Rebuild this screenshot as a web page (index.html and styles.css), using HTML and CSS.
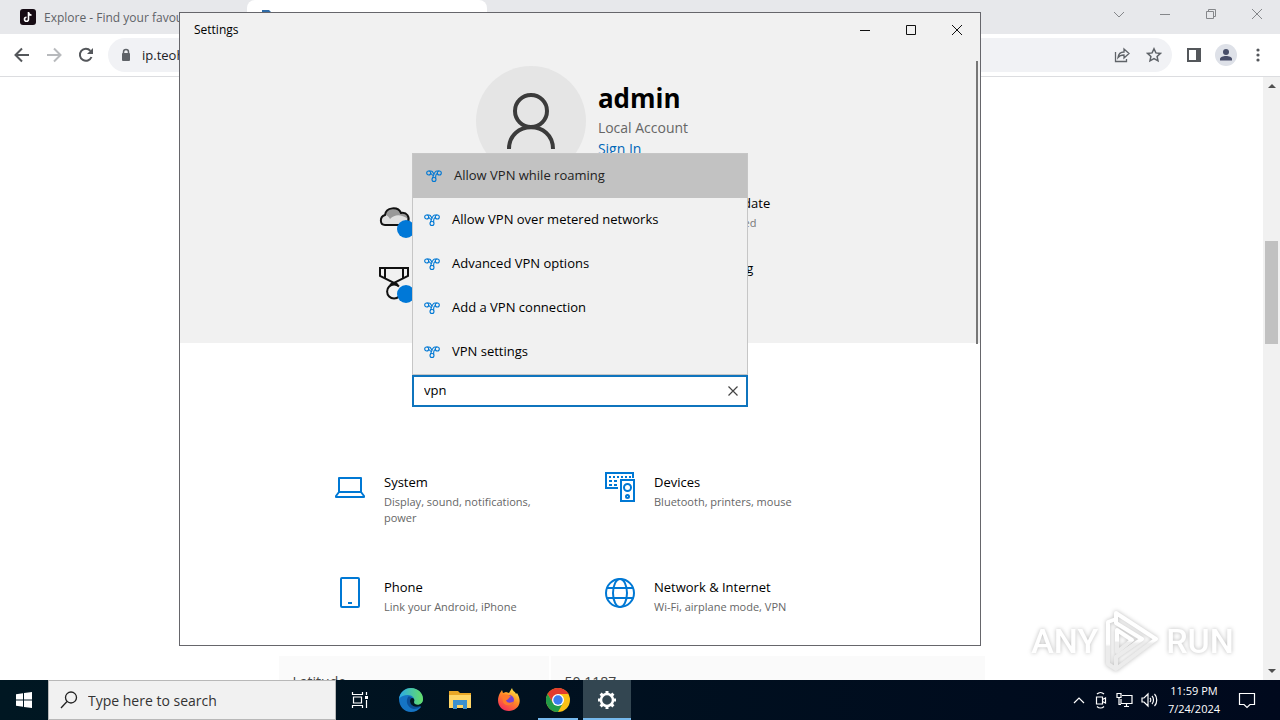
FILE: index.html
```
<!DOCTYPE html>
<html lang="en">
<head>
    <meta charset="UTF-8" />
    <meta name="viewport" content="width=device-width, initial-scale=1.0" />
    <title>Settings</title>
    <link rel="stylesheet" href="styles.css">
</head>
<body>

<!-- shared icon -->
<svg class="symbols" width="0" height="0">
    <symbol id="vpn" viewBox="0 0 16 14">
        <g fill="none" stroke="#0078d4" stroke-width="1.1">
            <circle cx="2.700" cy="4" r="2"/>
            <circle cx="13.300" cy="4" r="2"/>
            <circle cx="8" cy="10.500" r="2"/>
            <path d="M2.700 2H5c2.500 0 2 3.500 3.500 3.500M13.300 2H11C8 2 8 6 6.300 9.500M4.700 4.500C6 5 6 6.500 7.500 6.500M11.300 4.500C10 5 9.500 7 9.700 9.500"/>
        </g>
    </symbol>
</svg>

<div class="desktop">
    <div class="browser">
        <div class="tabs">
            <div class="tab">
                <svg width="16" height="16" viewBox="0 0 16 16"><rect width="16" height="16" rx="3" fill="#160b14"/><path d="M8.500 3v7.200a2 2 0 1 1-2-2M8.500 3.500c.3 1.700 1.500 2.500 3 2.600" fill="none" stroke="#fff" stroke-width="1.600"/></svg>
                <span>Explore - Find your favourite</span>
            </div>
            <div class="tab active">
                <svg width="16" height="16" viewBox="0 0 16 16"><path d="M3 1h7l3 3v10H3z" fill="#2f6ca8"/></svg>
            </div>
            <button class="new-tab" aria-label="New tab">+</button>
            <div class="window-buttons chrome-buttons">
                <button aria-label="Search tabs"><svg width="12" height="12" viewBox="0 0 12 12"><path d="M1 4l5 5 5-5"/></svg></button>
                <button aria-label="Minimize"><svg width="12" height="12" viewBox="0 0 12 12"><path d="M1 6.500h10"/></svg></button>
                <button aria-label="Restore"><svg width="12" height="12" viewBox="0 0 12 12"><path d="M1.500 3.500h7v7h-7zM3.500 3.500v-2h7v7h-2"/></svg></button>
                <button aria-label="Close"><svg width="12" height="12" viewBox="0 0 12 12"><path d="M1 1l10 10M11 1L1 11"/></svg></button>
            </div>
        </div>

        <div class="toolbar">
            <button aria-label="Back"><svg width="16" height="16" viewBox="0 0 16 16"><path d="M15 8H2M8 1.500L1.500 8 8 14.500" fill="none" stroke="#54575b" stroke-width="2"/></svg></button>
            <button aria-label="Forward"><svg width="16" height="16" viewBox="0 0 16 16"><path d="M1 8h13M8 1.500L14.500 8 8 14.500" fill="none" stroke="#b8babd" stroke-width="2"/></svg></button>
            <button aria-label="Reload"><svg width="16" height="16" viewBox="0 0 16 16"><path d="M13.500 10A6 6 0 1 1 12.400 3.800" fill="none" stroke="#54575b" stroke-width="2"/><path d="M15 1v6H9z" fill="#54575b"/></svg></button>
            <div class="address">
                <svg width="12" height="14" viewBox="0 0 12 14"><rect x="2" y="5" width="8" height="8" rx="1" fill="#5f6368"/><path d="M3.500 6V4a2.500 2.500 0 0 1 5 0v2" fill="none" stroke="#5f6368" stroke-width="1.500"/></svg>
                <input type="text" value="ip.teoh.io" aria-label="Address">
                <button aria-label="Share"><svg width="16" height="16" viewBox="0 0 16 16"><path d="M1.500 5v9.500h11V12M4 10.500c.5-4 3-5.500 6-5.500V2l5 4.500-5 4.500V8c-3 0-4.500.5-6 2.500z" fill="none" stroke="#5f6368" stroke-width="1.300"/></svg></button>
                <button aria-label="Bookmark"><svg width="16" height="16" viewBox="0 0 16 16"><path d="M8 1.800l1.900 4.100 4.500.5-3.300 3 .9 4.400L8 11.600l-4 2.200.9-4.400-3.300-3 4.500-.5z" fill="none" stroke="#5f6368" stroke-width="1.500"/></svg></button>
            </div>
            <button aria-label="Side panel"><svg width="14" height="14" viewBox="0 0 14 14"><path d="M1 1h12v12H1z" fill="none" stroke="#54575b" stroke-width="2"/><path d="M9 1h4v12H9z" fill="#54575b"/></svg></button>
            <button aria-label="Profile"><svg width="22" height="22" viewBox="0 0 22 22"><circle cx="11" cy="11" r="11" fill="#dee1e8"/><circle cx="11" cy="8" r="3" fill="#474d68"/><path d="M5 16.500v-1.500c0-4 12-4 12 0v1.500z" fill="#474d68"/></svg></button>
            <button aria-label="Menu"><svg width="16" height="16" viewBox="0 0 16 16" fill="#54575b"><circle cx="8" cy="3" r="1.600"/><circle cx="8" cy="8" r="1.600"/><circle cx="8" cy="13" r="1.600"/></svg></button>
        </div>

        <div class="page">
            <div class="page-content">
                <table>
                    <tr>
                        <td>Latitude</td>
                        <td>50.1187</td>
                    </tr>
                </table>
            </div>
            <div class="scrollbar">
                <span class="arrow up"></span>
                <span class="thumb"></span>
                <span class="arrow down"></span>
            </div>
        </div>
    </div>

    <div class="watermark">
        <span>ANY</span>
        <svg width="60" height="66" viewBox="0 0 60 66">
            <defs>
                <linearGradient id="mark" x1="0" y1="0" x2="0" y2="1"><stop offset="0.500" stop-color="#fff"/><stop offset="0.550" stop-color="#ececec"/></linearGradient>
            </defs>
            <g fill="none" stroke="url(#mark)" stroke-width="4" stroke-linejoin="round">
                <path d="M14 5l40 26-40 30V49l26-18-26-16z"/>
                <path d="M14 11L6 14v42l8 5"/>
                <path d="M15 22v22l15-12z"/>
            </g>
        </svg>
        <span>RUN</span>
    </div>

    <div class="settings">
        <div class="titlebar">
            <span>Settings</span>
            <div class="window-buttons">
                <button aria-label="Minimize"><svg width="12" height="12" viewBox="0 0 12 12"><path d="M1 6.500h10"/></svg></button>
                <button aria-label="Maximize"><svg width="12" height="12" viewBox="0 0 12 12"><path d="M1.500 1.500h9v9h-9z"/></svg></button>
                <button aria-label="Close"><svg width="12" height="12" viewBox="0 0 12 12"><path d="M1 1l10 10M11 1L1 11"/></svg></button>
            </div>
        </div>

        <div class="account-area">
            <div class="account">
                <div class="avatar">
                    <svg width="50" height="58" viewBox="0 0 50 58"><circle cx="25" cy="19" r="16" fill="none" stroke="#3b3b3b" stroke-width="4"/><path d="M3 57c0-29 44-29 44 0" fill="none" stroke="#3b3b3b" stroke-width="4"/></svg>
                </div>
                <div>
                    <h1>admin</h1>
                    <p>Local Account</p>
                    <a href="#">Sign In</a>
                </div>
            </div>
            <div class="status-list">
                <div class="status">
                    <svg width="36" height="36" viewBox="0 -2 36 36">
                        <path d="M7 21C2 21 1 13 7 11c1-8 13-9 16-2 6-1 9 4 7 9-1 2-3 3-5 3z" fill="#e0e0e0"/>
                        <path d="M7 11c1-8 13-9 16-2 4 0 7 3 7 6-7-5-13-5-18 0-1-2-3-4-5-4z" fill="#999"/>
                        <path d="M7 21C2 21 1 13 7 11c1-8 13-9 16-2 6-1 9 4 7 9-1 2-3 3-5 3z" fill="none" stroke="#111" stroke-width="2"/>
                        <circle cx="28" cy="25" r="9" fill="#0078d7"/>
                    </svg>
                </div>
                <div class="status">
                    <div>
                        <h2>Windows Update</h2>
                        <p>Attention needed</p>
                    </div>
                </div>
                <div class="status">
                    <svg width="36" height="36" viewBox="0 2 36 36">
                        <g fill="none" stroke="#111" stroke-width="2"><path d="M2 3h28v8l-14 7L2 11zM7 3v10M25 3v10M16 17l-4 3M16 17l4 3"/><path d="M21 31.500a7 7 0 1 1 0-10"/></g>
                        <circle cx="28" cy="29" r="9" fill="#0078d7"/>
                    </svg>
                </div>
                <div class="status">
                    <div>
                        <h2>Web browsing</h2>
                    </div>
                </div>
            </div>
        </div>

        <form class="search">
            <ul class="suggestions">
                <li class="selected"><svg width="16" height="14"><use href="#vpn"/></svg>Allow VPN while roaming</li>
                <li><svg width="16" height="14"><use href="#vpn"/></svg>Allow VPN over metered networks</li>
                <li><svg width="16" height="14"><use href="#vpn"/></svg>Advanced VPN options</li>
                <li><svg width="16" height="14"><use href="#vpn"/></svg>Add a VPN connection</li>
                <li><svg width="16" height="14"><use href="#vpn"/></svg>VPN settings</li>
            </ul>
            <input type="text" value="vpn" aria-label="Find a setting">
            <button type="button" aria-label="Clear"><svg width="10" height="10" viewBox="0 0 10 10"><path d="M.5.5l9 9M9.500.5l-9 9" stroke="#444" stroke-width="1.200"/></svg></button>
        </form>

        <div class="categories">
            <a href="#" class="category">
                <svg width="32" height="32" viewBox="0 0 32 32"><path d="M5 6h22v14H5zM5 20l-3 4v1h28v-1l-3-4" fill="none" stroke="#0078d4" stroke-width="2" stroke-linejoin="round"/></svg>
                <div>
                    <h2>System</h2>
                    <p>Display, sound, notifications, power</p>
                </div>
            </a>
            <a href="#" class="category">
                <svg width="32" height="32" viewBox="0 0 32 32">
                    <g fill="none" stroke="#0078d4" stroke-width="2"><path d="M14 16H2V1h27v5M17 8h13v21H17z"/><circle cx="23.500" cy="15.500" r="3.500"/><circle cx="23.500" cy="24.500" r="1.500"/><path d="M5 5h22" stroke-dasharray="2 2"/><path d="M5 9h9M5 13h9" stroke-dasharray="3 2"/></g>
                </svg>
                <div>
                    <h2>Devices</h2>
                    <p>Bluetooth, printers, mouse</p>
                </div>
            </a>
            <a href="#" class="category">
                <svg width="32" height="32" viewBox="0 0 32 32"><rect x="7" y="1" width="18" height="29" rx="1" fill="none" stroke="#0078d4" stroke-width="2"/><path d="M14 26h4" stroke="#0078d4" stroke-width="2"/></svg>
                <div>
                    <h2>Phone</h2>
                    <p>Link your Android, iPhone</p>
                </div>
            </a>
            <a href="#" class="category">
                <svg width="32" height="32" viewBox="0 0 32 32"><g fill="none" stroke="#0078d4" stroke-width="2"><circle cx="16" cy="16" r="14"/><ellipse cx="16" cy="16" rx="7" ry="14"/><path d="M3 11h26M3 21h26"/></g></svg>
                <div>
                    <h2>Network &amp; Internet</h2>
                    <p>Wi-Fi, airplane mode, VPN</p>
                </div>
            </a>
        </div>
        <span class="settings-scroll"></span>
    </div>
</div>

<div class="taskbar">
    <button aria-label="Start"><svg width="16" height="16" viewBox="0 0 16 16" fill="#fff"><path d="M0 2.200l7-1v6.300H0zM8 1l8-1v7.500H8zM0 8.500h7v6.300l-7-1zM8 8.500h8V16l-8-1z"/></svg></button>
    <label class="taskbar-search">
        <svg width="18" height="18" viewBox="0 0 18 18"><circle cx="11" cy="6.500" r="5.500" fill="none" stroke="#222" stroke-width="1.300"/><path d="M7 10.500L1 17" stroke="#222" stroke-width="1.300"/></svg>
        <input type="text" placeholder="Type here to search">
    </label>
    <button class="task-view" aria-label="Task view"><svg width="18" height="16" viewBox="0 0 18 16"><path d="M1.500 0v2.500h10V0M1.500 16v-2.500h10V16M2.500 5h8v6h-8zM15.500 0v3M15.500 8v8" fill="none" stroke="#fff" stroke-width="1.200"/><path d="M14 4h3v3h-3z" fill="#fff"/></svg></button>
    <button aria-label="Edge">
        <svg width="24" height="24" viewBox="0 0 24 24">
            <defs><linearGradient id="edge" x1="0" x2="1"><stop offset="0" stop-color="#2aa9e8"/><stop offset="1" stop-color="#66df66"/></linearGradient></defs>
            <path d="M0 11C1 4 6 0 12 0s12 5 12 11c0 3-2 5-4 6l2 2c-2 3-6 5-10 5C5 24 0 18 0 11z" fill="#1574c4"/>
            <path d="M0 11C1 4 6 0 12 0c7 0 12 5 12 11 0 4-3 6-6 6-4 0-5-2-3-4 1-3-2-6-6-6-4 0-7 1-9 4z" fill="url(#edge)"/>
            <path d="M9 9c-3 5 0 11 6 12 3 0 5-1 7-3-5 2-11 0-11-5 0-2 1-3 2-3-1-1-3-2-4-1z" fill="#0b4f98"/>
            <path d="M11 13c0 5 6 7 11 5l1-3c-3 3-8 2-8-1 1-2 0-4-2-4-1 0-2 1-2 3z" fill="#001722"/>
        </svg>
    </button>
    <button aria-label="File Explorer">
        <svg width="22" height="20" viewBox="0 0 22 20"><path d="M0 1h9l2 2h11v15H0z" fill="#e9a726"/><path d="M0 5h22v13H0z" fill="#ffd667"/><path d="M4 10h14v9h-4v-4H8v4H4z" fill="#3c91cf"/></svg>
    </button>
    <button aria-label="Firefox">
        <svg width="24" height="24" viewBox="0 0 24 24">
            <defs><linearGradient id="fox" x1="0.800" y1="0" x2="0.200" y2="1"><stop offset="0" stop-color="#fff04a"/><stop offset="0.450" stop-color="#ff8a25"/><stop offset="1" stop-color="#f5265f"/></linearGradient></defs>
            <path d="M3 5l2-3 1 3 3-1 3 1 3-5c1 4 3 3 4 6l1-1c7 11-1 18-8 18C3 23-2 14 3 5z" fill="url(#fox)"/>
            <circle cx="12" cy="12" r="5" fill="#7542d4"/><path d="M5 7c4-1 8 0 9 2-3 0-2 3-5 3 1 4 6 3 8 1-1 5-9 6-11 1z" fill="#ff7a2b"/>
        </svg>
    </button>
    <button class="running" aria-label="Chrome">
        <svg width="24" height="24" viewBox="0 0 24 24"><circle cx="12" cy="12" r="12" fill="#fbc116"/><path d="M1.600 6A12 12 0 0 1 22.400 6H12L7 15z" fill="#e33b2e"/><path d="M1.600 6A12 12 0 0 0 12 24l5-9H7z" fill="#229b48"/><circle cx="12" cy="12" r="6" fill="#fff"/><circle cx="12" cy="12" r="4.700" fill="#3b7ded"/></svg>
    </button>
    <button class="running current" aria-label="Settings">
        <svg width="20" height="20" viewBox="0 0 20 20" fill="none" stroke="#fff"><circle cx="10" cy="10" r="6" stroke-width="2.500"/><path d="M10 1v3M10 16v3M1 10h3M16 10h3M3.600 3.600l2 2M14.400 14.400l2 2M3.600 16.400l2-2M14.400 5.600l2-2" stroke-width="3"/></svg>
    </button>

    <div class="tray">
        <svg width="14" height="16" viewBox="0 0 14 16"><path d="M2 11l5-5 5 5"/></svg>
        <svg width="14" height="18" viewBox="0 0 14 18"><path d="M2.500 6h6v7h-6zM8.500 8.500l3-1.500v5l-3-1.500M3 3c2-2 5-2 7 0M3 15.500c2 2 5 2 7 0"/></svg>
        <svg width="17" height="16" viewBox="0 0 17 16"><path d="M6 3.500h10v8H5V7M8 14.500h5M10.500 11.500v3M1 1.500h4v4H1zM3 5.500v7h2"/></svg>
        <svg width="17" height="16" viewBox="0 0 17 16"><path d="M1 6h2l4-4v12l-4-4H1zM9 6c1 1 1 3 0 4M11 4c2 2 2 6 0 8M13.500 2c3 3 3 9 0 12"/></svg>
        <div class="clock">
            <span>11:59 PM</span>
            <span>7/24/2024</span>
        </div>
        <svg width="18" height="18" viewBox="0 0 18 18"><path d="M1.500 2.500h15v11H12l-3 3-3-3H1.500z"/></svg>
    </div>
</div>

</body>
</html>
```
FILE: styles.css
```
* {
    box-sizing: border-box;
    margin: 0;
    padding: 0;
}

body {
    font-family: 'Open Sans', 'Noto Sans', sans-serif;
    font-size: 13px;
    color: #000;
    height: 100vh;
    display: flex;
    flex-direction: column;
    overflow: hidden;
}

button {
    border: none;
    background: none;
    display: flex;
    align-items: center;
    justify-content: center;
}

input {
    font-family: inherit;
    border: none;
    outline: none;
    background: none;
    min-width: 0;
}

h2 {
    font-size: 13px;
    font-weight: normal;
    line-height: 20px;
}

.symbols {
    position: absolute;
}

.desktop {
    flex: 1;
    min-height: 0;
    position: relative;
    display: flex;
}

/* Browser */
.browser {
    flex: 1;
    min-width: 0;
    display: flex;
    flex-direction: column;
    background: #fff;
}

.tabs {
    height: 34px;
    display: flex;
    background: #e7e8eb;
    flex-shrink: 0;
}

.tab {
    width: 247px;
    padding-left: 20px;
    display: flex;
    align-items: center;
    gap: 8px;
    font-size: 12px;
    color: #5f6368;
}

.tab.active {
    width: 240px;
    padding-left: 12px;
    background: #fff;
    border-radius: 8px 8px 0 0;
}

.new-tab {
    width: 44px;
    font-size: 18px;
    color: #54575b;
}

.window-buttons {
    display: flex;
    margin-left: auto;
}

.window-buttons button {
    width: 46px;
}

.window-buttons svg {
    fill: none;
    stroke: #111;
    stroke-width: 1;
}

.chrome-buttons {
    height: 28px;
}

.chrome-buttons svg {
    stroke: #85878a;
}

.toolbar {
    height: 43px;
    padding: 4px 6px;
    display: flex;
    align-items: center;
    border-bottom: 1px solid #dcdde0;
    flex-shrink: 0;
}

.toolbar > button {
    width: 32px;
    height: 34px;
}

.address {
    flex: 1;
    height: 34px;
    margin: 0 6px;
    padding: 0 10px 0 12px;
    display: flex;
    align-items: center;
    gap: 16px;
    background: #f1f2f5;
    border-radius: 17px;
}

.address input {
    flex: 1;
    margin-left: -6px;
    font-size: 13px;
    color: #202124;
}

.page {
    flex: 1;
    min-height: 0;
    display: flex;
}

.page-content {
    flex: 1;
    padding-top: 577px;
    overflow: hidden;
}

.page table {
    width: 90%;
    max-width: 710px;
    margin: 0 auto;
    border-spacing: 2px;
    font-size: 14px;
    color: #444;
}

.page td {
    background: #fafafa;
    padding: 14px;
    line-height: 24px;
}

.page td:first-child {
    width: 270px;
}

.scrollbar {
    width: 17px;
    background: #f1f1f1;
    display: flex;
    flex-direction: column;
    align-items: center;
    padding: 7px 0;
}

.arrow {
    border: 4px solid transparent;
}

.arrow.up {
    border-top: none;
    border-bottom-color: #505050;
}

.arrow.down {
    margin-top: auto;
    border-bottom: none;
    border-top-color: #505050;
}

.thumb {
    width: 13px;
    height: 103px;
    margin-top: 153px;
    background: #c1c1c1;
}

.watermark {
    position: absolute;
    right: 46px;
    bottom: 6px;
    display: flex;
    align-items: center;
    gap: 4px;
    font-family: Roboto, sans-serif;
    font-weight: 500;
    font-size: 34px;
    color: #fff;
    filter: drop-shadow(0 0 2px #bbb);
}

/* Settings window */
.settings {
    position: absolute;
    left: 179px;
    right: 299px;
    top: 12px;
    bottom: 34px;
    background: #fff;
    border: 1px solid #66666b;
    overflow: hidden;
    display: flex;
    flex-direction: column;
}

.titlebar {
    height: 33px;
    padding-left: 14px;
    display: flex;
    align-items: center;
    font-size: 12px;
    background: #f1f1f1;
    flex-shrink: 0;
}

.titlebar .window-buttons {
    height: 32px;
}

.account-area {
    height: 297px;
    padding-top: 20px;
    background: #f1f1f1;
    flex-shrink: 0;
}

.account {
    padding-left: 4px;
    display: flex;
    justify-content: center;
    gap: 12px;
}

.avatar {
    width: 110px;
    height: 110px;
    border-radius: 50%;
    background: #e5e5e5;
    display: flex;
    align-items: center;
    justify-content: center;
}

.account h1 {
    font-size: 26px;
    line-height: 36px;
    margin: 14px 0 2px;
}

.account p {
    font-size: 14px;
    line-height: 20px;
    color: #666;
}

.account a {
    font-size: 14px;
    line-height: 22px;
    color: #0067b8;
    text-decoration: none;
}

.status-list {
    width: 404px;
    margin: 17px auto 0;
    display: grid;
    grid-template-columns: 289px 1fr;
    grid-auto-rows: 65px;
}

.status svg {
    margin-top: 9px;
}

.status h2 {
    white-space: nowrap;
}

.status p {
    font-size: 11px;
    line-height: 20px;
    color: #777;
    white-space: nowrap;
}

.search {
    position: relative;
    width: 336px;
    height: 32px;
    margin: 32px auto 0;
    border: 2px solid #0f74bd;
    background: #fff;
    display: flex;
    flex-shrink: 0;
}

.search input {
    flex: 1;
    padding: 0 10px 2px;
    font-size: 13px;
}

.search button {
    width: 26px;
}

.suggestions {
    position: absolute;
    left: -2px;
    right: -2px;
    bottom: 100%;
    margin-bottom: 2px;
    list-style: none;
    background: #f1f1f1;
    border: 1px solid #c6c6c6;
}

.suggestions li {
    height: 44px;
    padding: 0 0 2px 11px;
    display: flex;
    align-items: center;
    gap: 12px;
}

.suggestions svg {
    margin-top: 2px;
}

.suggestions .selected {
    padding-left: 13px;
    background: #c2c2c2;
    color: #222;
}

.categories {
    width: 540px;
    margin: 65px auto 0;
    display: grid;
    grid-template-columns: 1fr 1fr;
    grid-auto-rows: 105px;
}

.category {
    display: flex;
    align-items: flex-start;
    gap: 18px;
    padding: 0 24px;
    color: #000;
    text-decoration: none;
}

.category svg {
    flex-shrink: 0;
}

.category p {
    margin-top: 2px;
    font-size: 11px;
    line-height: 16px;
    color: #666;
}

.settings-scroll {
    position: absolute;
    right: 2px;
    top: 48px;
    width: 2px;
    height: 283px;
    background: #777;
}

/* Taskbar */
.taskbar {
    height: 40px;
    display: flex;
    gap: 1px;
    background: linear-gradient(90deg, #001722, #00091d);
    flex-shrink: 0;
}

.taskbar button {
    width: 48px;
}

.taskbar-search {
    width: 288px;
    margin: 0 -1px;
    padding-left: 11px;
    display: flex;
    align-items: center;
    gap: 10px;
    background: #f1f1f1;
    border: 1px solid #b8b8b8;
}

.taskbar-search input {
    flex: 1;
    font-size: 14px;
}

.taskbar-search input::placeholder {
    color: #333;
}

.taskbar .task-view {
    margin-right: 2px;
}

.running {
    background: linear-gradient(#76b9ed, #76b9ed) bottom / 40px 2px no-repeat;
}

.running.current {
    background: linear-gradient(#76b9ed, #76b9ed) bottom / 100% 2px no-repeat #334651;
}

.tray {
    margin-left: auto;
    padding-right: 24px;
    display: flex;
    align-items: center;
    gap: 8px;
}

.tray svg {
    fill: none;
    stroke: #fff;
    stroke-width: 1.2;
}

.clock {
    width: 56px;
    margin-right: 8px;
    display: flex;
    flex-direction: column;
    align-items: center;
    font-size: 11px;
    line-height: 18px;
    color: #fff;
}
```
